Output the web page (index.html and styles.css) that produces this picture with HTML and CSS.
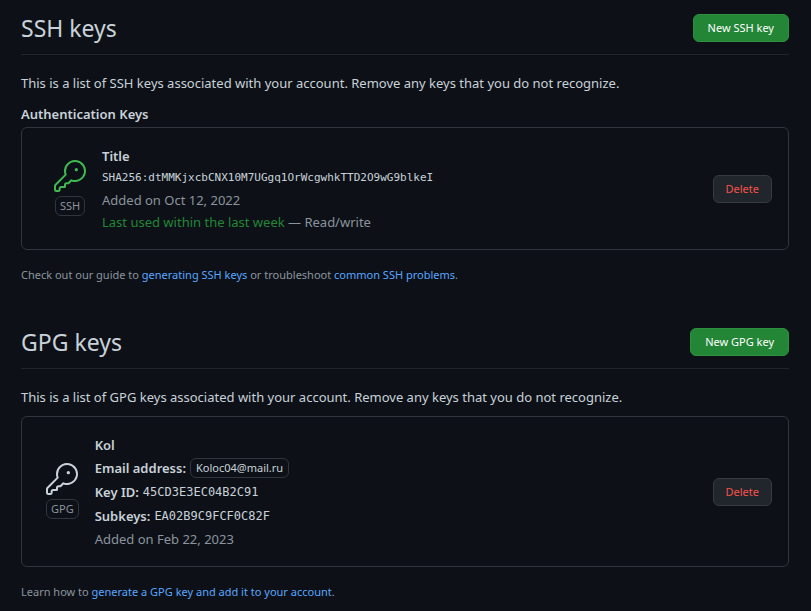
FILE: index.html
```html
<!DOCTYPE html>
<html lang="en">
<head>
<meta charset="utf-8">
<title>SSH and GPG keys</title>
<link rel="stylesheet" href="styles.css">
</head>
<body>
<svg class="sprite" aria-hidden="true">
  <symbol id="key" viewBox="0 0 24 24">
    <path d="M16.75 8.5a1.25 1.25 0 1 0 0-2.5 1.25 1.25 0 0 0 0 2.5Z"/>
    <path d="M15.75 0a8.25 8.25 0 1 1-2.541 16.101l-1.636 1.636a1.744 1.744 0 0 1-1.237.513H9.25a.25.25 0 0 0-.25.25v1.448a.876.876 0 0 1-.256.619l-.214.213a.75.75 0 0 1-.545.22H5.25a.25.25 0 0 0-.25.25v1A1.75 1.75 0 0 1 3.25 24h-1.5A1.75 1.75 0 0 1 0 22.25v-2.836c0-.464.185-.908.513-1.236l7.386-7.388A8.249 8.249 0 0 1 15.75 0ZM9 8.25a6.733 6.733 0 0 0 .463 2.462.75.75 0 0 1-.168.804l-7.722 7.721a.25.25 0 0 0-.073.177v2.836c0 .138.112.25.25.25h1.5a.25.25 0 0 0 .25-.25v-1c0-.966.784-1.75 1.75-1.75H7.5v-1c0-.966.784-1.75 1.75-1.75h1.086a.25.25 0 0 0 .177-.073l1.971-1.972a.75.75 0 0 1 .804-.168A6.75 6.75 0 1 0 9 8.25Z"/>
  </symbol>
</svg>
<main class="settings">
  <section class="keys">
    <header class="subhead">
      <h2>SSH keys</h2>
      <button class="btn btn-primary" type="button">New SSH key</button>
    </header>
    <p class="intro">This is a list of SSH keys associated with your account. Remove any keys that you do not recognize.</p>
    <h3 class="group-title">Authentication Keys</h3>
    <div class="card card-ssh">
      <div class="kind kind-active">
        <svg class="key-icon" aria-hidden="true"><use href="#key"/></svg>
        <span class="label">SSH</span>
      </div>
      <div class="details">
        <strong>Title</strong>
        <code class="fingerprint">SHA256:dtMMKjxcbCNX10M7UGgq1OrWcgwhkTTD2O9wG9blkeI</code>
        <span class="muted">Added on Oct 12, 2022</span>
        <span class="muted"><span class="recent">Last used within the last week</span> — Read/write</span>
      </div>
      <button class="btn btn-danger" type="button">Delete</button>
    </div>
    <p class="note">Check out our guide to <a href="#ssh-guide">generating SSH keys</a> or troubleshoot <a href="#ssh-problems">common SSH problems</a>.</p>
  </section>

  <section class="keys">
    <header class="subhead">
      <h2>GPG keys</h2>
      <button class="btn btn-primary" type="button">New GPG key</button>
    </header>
    <p class="intro">This is a list of GPG keys associated with your account. Remove any keys that you do not recognize.</p>
    <div class="card card-gpg">
      <div class="kind">
        <svg class="key-icon" aria-hidden="true"><use href="#key"/></svg>
        <span class="label">GPG</span>
      </div>
      <div class="details details-gpg">
        <strong>Kol</strong>
        <span class="row"><strong>Email address:</strong> <span class="label label-email">Koloc04@mail.ru</span></span>
        <span class="row"><strong>Key ID:</strong> <code>45CD3E3EC04B2C91</code></span>
        <span class="row"><strong>Subkeys:</strong> <code>EA02B9C9FCF0C82F</code></span>
        <span class="muted">Added on Feb 22, 2023</span>
      </div>
      <button class="btn btn-danger" type="button">Delete</button>
    </div>
    <p class="note">Learn how to <a href="#gpg-guide">generate a GPG key and add it to your account</a>.</p>
  </section>
</main>
</body>
</html>
```
FILE: styles.css
```css
* { box-sizing: border-box; }

body {
  margin: 0;
  background: #0d1117;
  color: #c9d1d9;
  font: 13px/21px "Noto Sans", sans-serif;
}

h2, h3, p { margin: 0; }
strong, h3 { font-weight: 600; font-size: 13px; }
.sprite { display: none; }

.settings { padding: 12px 22px 0 21px; }
.keys + .keys { margin-top: 41px; }

.subhead {
  display: flex;
  align-items: center;
  justify-content: space-between;
  height: 43px;
  padding-bottom: 10px;
  border-bottom: 1px solid #21262d;
}
.subhead h2 { font-size: 23px; line-height: 36px; font-weight: 400; }

.btn {
  height: 28px;
  padding: 0 12px;
  border: 1px solid #363b42;
  border-radius: 6px;
  font: 11px/20px "Noto Sans", sans-serif;
}
.btn-primary { padding: 0 14px; background: #238636; border-color: #2f8f41; color: #fff; }
.btn-danger { background: #21262d; color: #f85149; margin-left: auto; }

.intro { margin-top: 18px; }
.group-title { margin-top: 10px; line-height: 21px; }

.card {
  display: flex;
  align-items: center;
  gap: 16px;
  padding: 0 16px 0 24px;
  border: 1px solid #30363d;
  border-radius: 6px;
}
.card-ssh { margin-top: 2px; min-height: 123px; padding-left: 32px; }
.card-gpg { margin-top: 8px; min-height: 151px; }

.kind {
  display: flex;
  flex-direction: column;
  align-items: center;
  gap: 4px;
  padding-bottom: 2px;
}
.key-icon { width: 32px; height: 32px; fill: currentColor; }
.kind-active .key-icon { color: #3fb950; }

.label {
  padding: 0 4px;
  border: 1px solid #30363d;
  border-radius: 6px;
  font-size: 11px;
  line-height: 18px;
  color: #8b949e;
}

.details { display: flex; flex-direction: column; line-height: 22px; }
.details-gpg .row { display: flex; align-items: center; gap: 4px; height: 24px; }
.label-email { color: #c9d1d9; padding: 0 5px; }

code { font-family: "DejaVu Sans Mono", monospace; font-size: 12px; }
.fingerprint { font-size: 11px; }

.muted { color: #8b949e; }
.recent { color: #238636; }

.note { margin-top: 15px; font-size: 11px; line-height: 20px; color: #8b949e; }
a { color: #58a6ff; text-decoration: none; }
```
